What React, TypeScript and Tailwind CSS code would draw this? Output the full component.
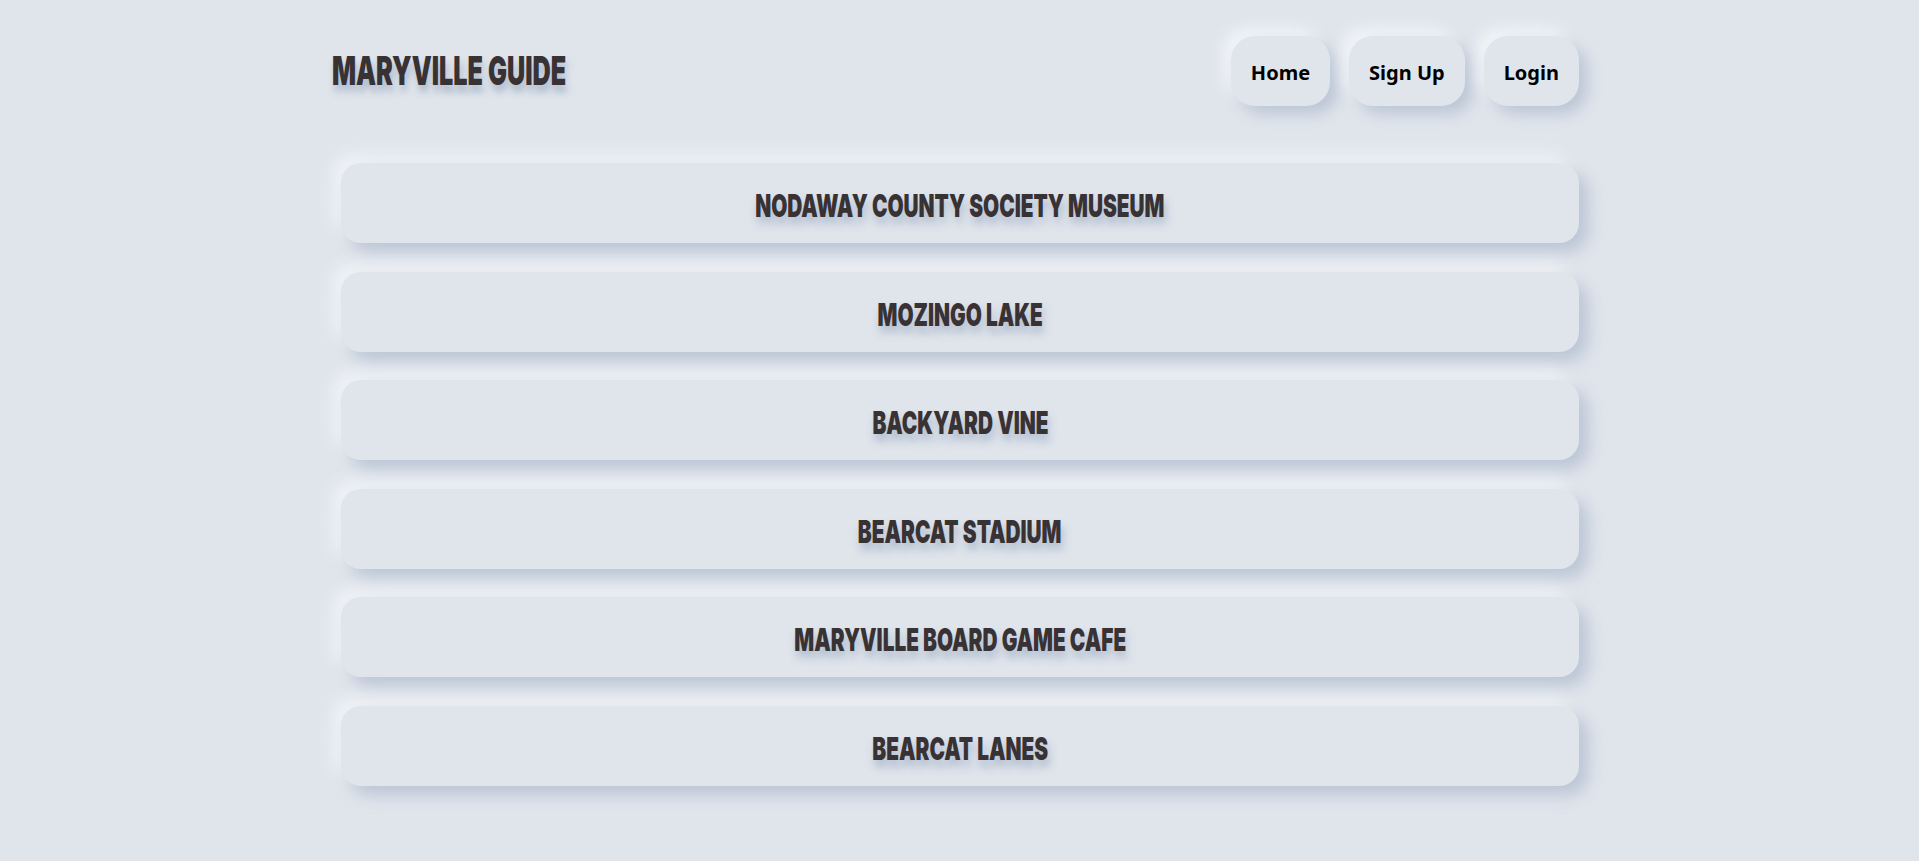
const places = [
  'NODAWAY COUNTY SOCIETY MUSEUM',
  'MOZINGO LAKE',
  'BACKYARD VINE',
  'BEARCAT STADIUM',
  'MARYVILLE BOARD GAME CAFE',
  'BEARCAT LANES',
];

const navLinks = ['Home', 'Sign Up', 'Login'];

export default function App() {
  return (
    <div className="min-h-screen bg-[#e0e5ec] font-['Noto_Sans',sans-serif]">
      <div className="ml-[332px] w-[1247px] pt-9">
        {/* Header */}
        <header className="flex items-center justify-between">
          <h1 className="origin-left scale-x-[0.63] font-['Inter',sans-serif] text-[40px] font-black leading-none text-[#383234] [text-shadow:3px_7px_10px_rgba(163,177,198,0.85)]">
            MARYVILLE GUIDE
          </h1>
          <nav className="flex gap-[19px]">
            {navLinks.map((link) => (
              <a
                key={link}
                href="#"
                className="rounded-[24px] bg-[#e0e5ec] px-5 pt-[23px] pb-[19px] text-[20px] font-bold leading-[28px] text-black shadow-[8px_8px_15px_rgba(163,177,198,0.6),-8px_-8px_15px_rgba(255,255,255,0.6)]"
              >
                {link}
              </a>
            ))}
          </nav>
        </header>

        {/* Places */}
        <div className="mt-[57px] flex flex-col gap-[28.6px] pl-[9px]">
          {places.map((place) => (
            <div
              key={place}
              className="flex h-20 items-center justify-center rounded-[20px] bg-[#e0e5ec] shadow-[9px_9px_16px_rgba(163,177,198,0.6),-9px_-9px_16px_rgba(255,255,255,0.5)]"
            >
              <span className="inline-block translate-y-[3px] scale-x-[0.65] font-['Inter',sans-serif] text-[32px] font-black leading-none text-[#383234] [text-shadow:3px_7px_10px_rgba(163,177,198,0.85)]">
                {place}
              </span>
            </div>
          ))}
        </div>
      </div>
    </div>
  );
}
